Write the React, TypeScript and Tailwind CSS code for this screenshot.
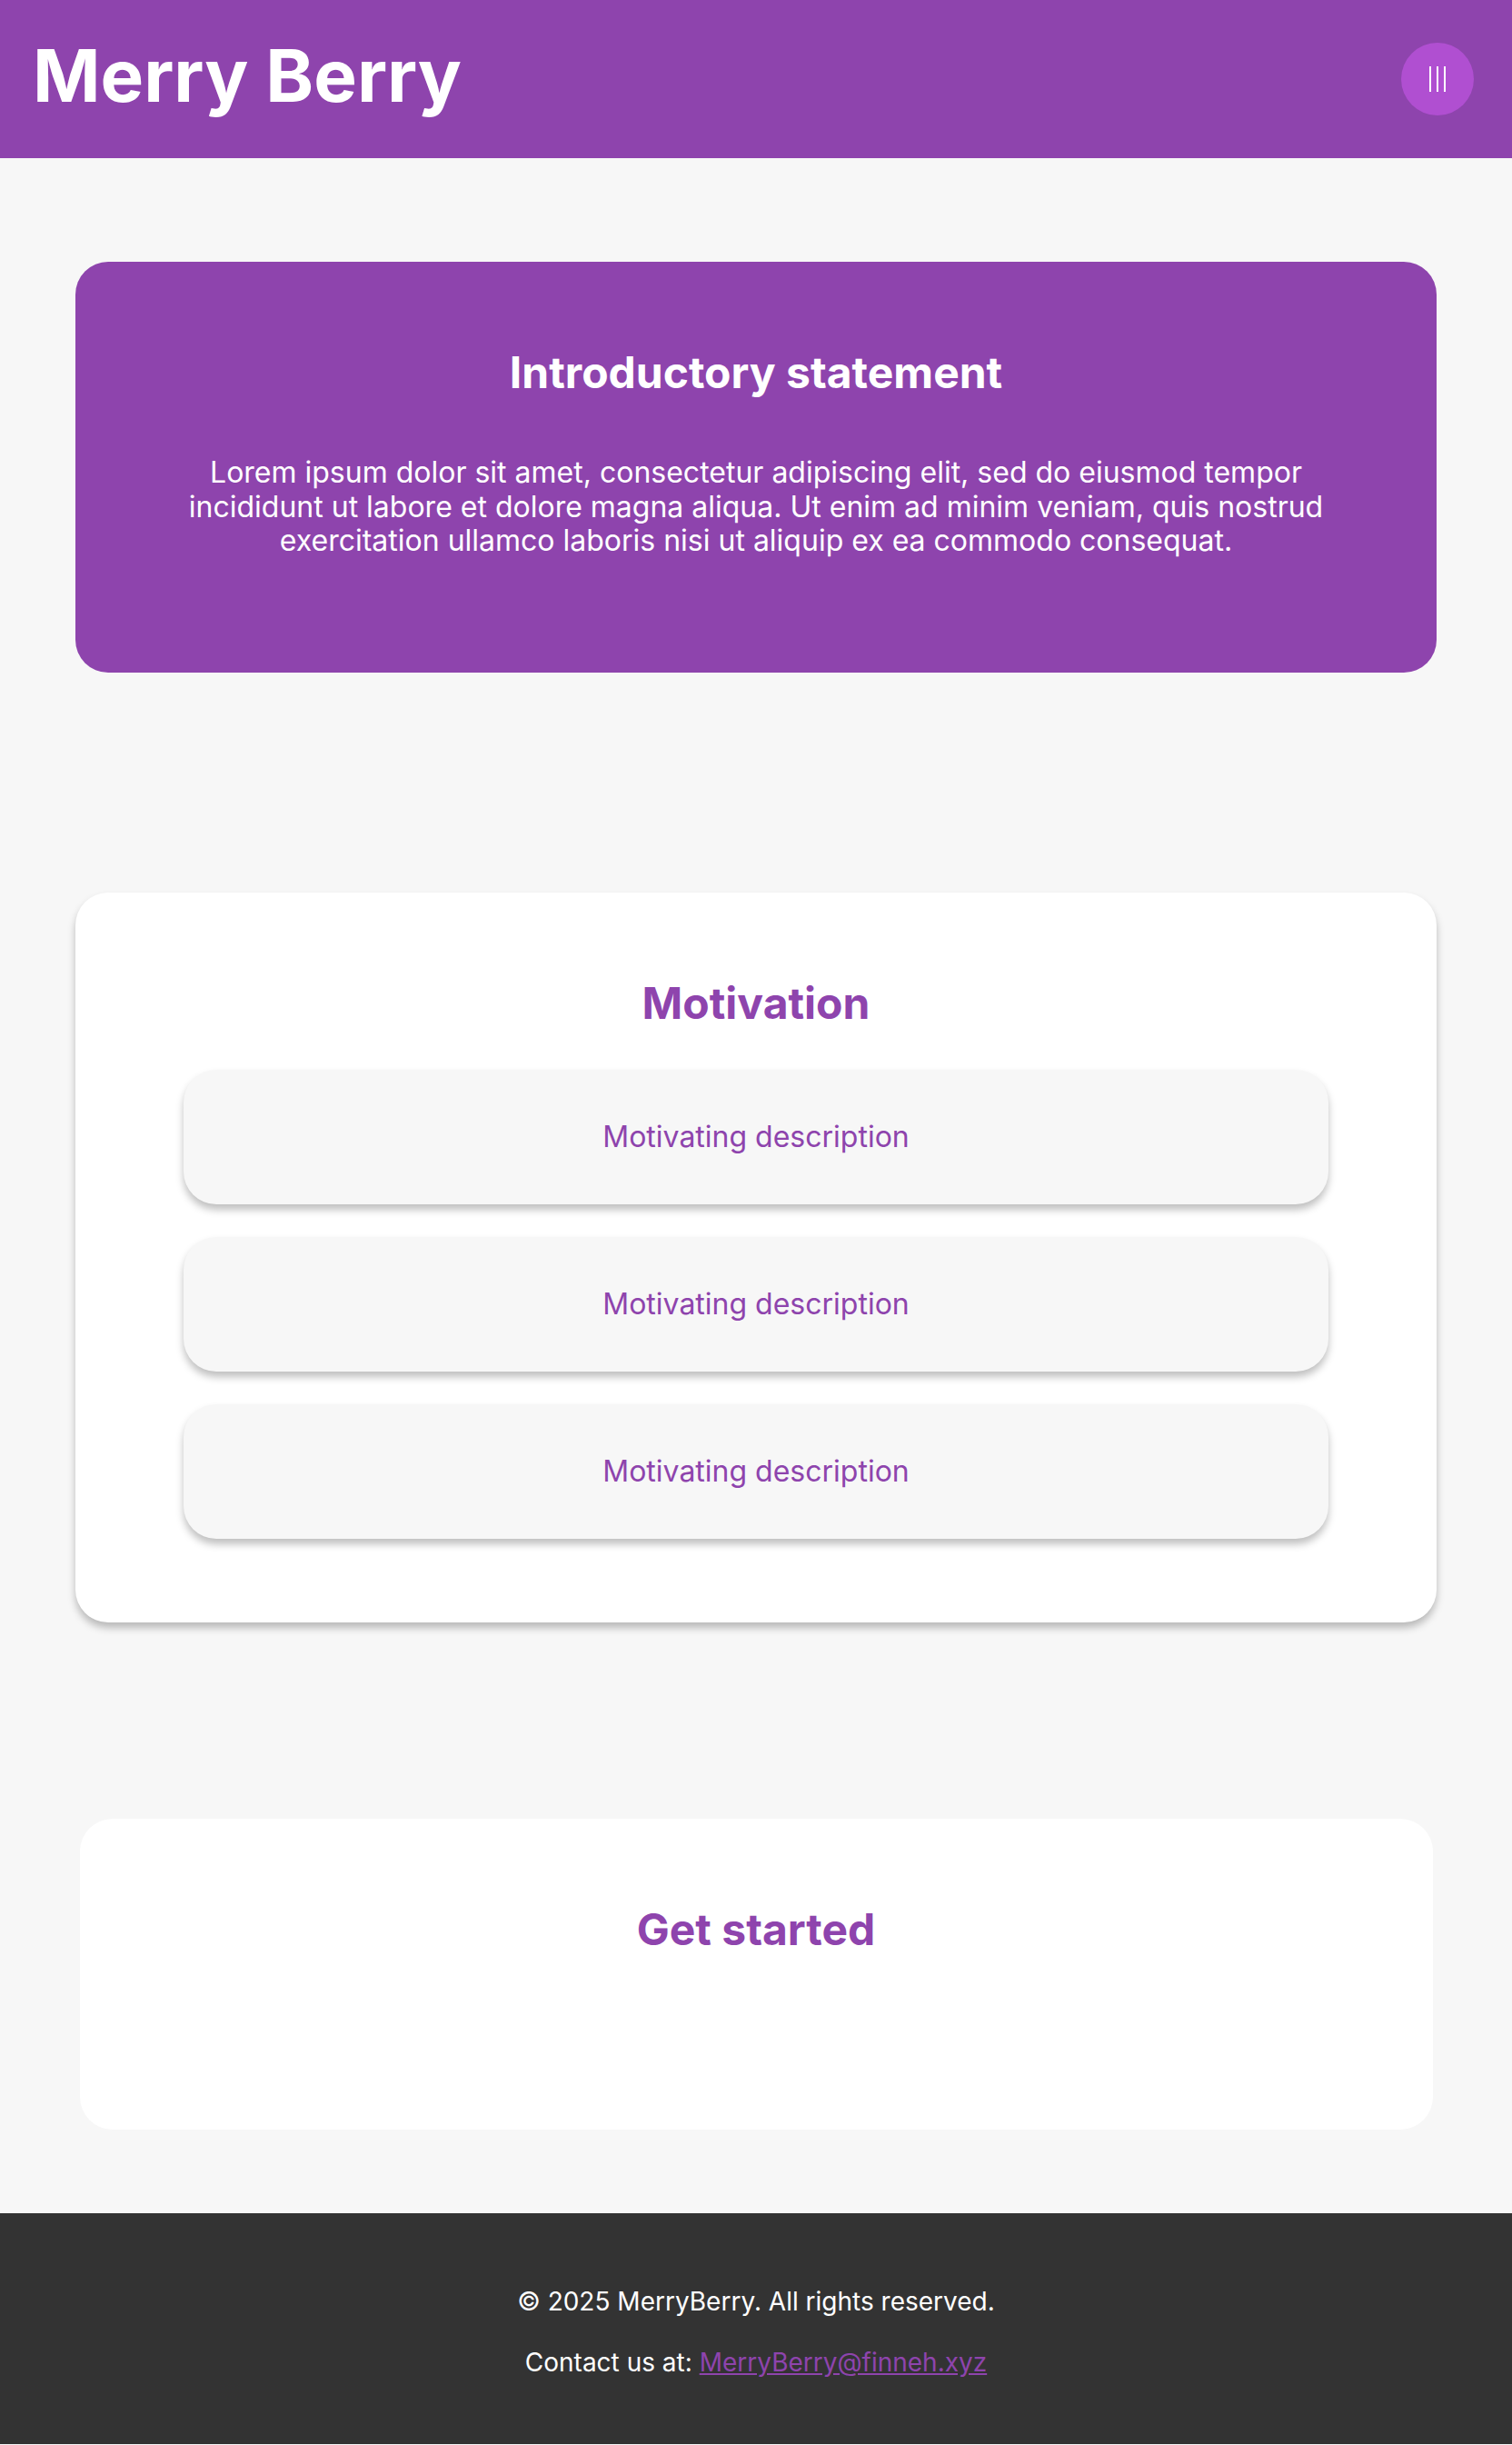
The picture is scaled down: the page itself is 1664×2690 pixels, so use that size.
import React from 'react'

const PURPLE = '#8e44ad'

const MOTIVATIONS = ['Motivating description', 'Motivating description', 'Motivating description']

function MenuButton() {
  return (
    <button className="w-[80px] h-[80px] rounded-full bg-[#b04fd1] flex items-center justify-center gap-[6px] cursor-pointer">
      <span className="block w-[2px] h-[28px] bg-white" />
      <span className="block w-[2px] h-[28px] bg-white" />
      <span className="block w-[2px] h-[28px] bg-white" />
    </button>
  )
}

export default function App() {
  return (
    <div className="min-h-screen bg-[#f7f7f7] font-['Inter','Noto_Sans',sans-serif]">
      {/* HEADER */}
      <header className="h-[174px] bg-[#8e44ad] flex items-center justify-between pl-[36px] pr-[42px]">
        <h1 className="-mt-2 text-[80px] leading-[80px] font-bold text-white">Merry Berry</h1>
        <MenuButton />
      </header>

      <main className="pt-[114px] pb-[92px] flex flex-col items-center">
        {/* INTRO */}
        <section className="w-[90%] h-[452px] bg-[#8e44ad] rounded-[36px] pt-[93px] text-center text-white">
          <h2 className="text-[48px] leading-[58px] font-bold">Introductory statement</h2>
          <p className="mt-[62px] max-w-[1300px] mx-auto text-[32px] leading-[37.5px]">
            Lorem ipsum dolor sit amet, consectetur adipiscing elit, sed do eiusmod tempor incididunt ut labore et dolore magna aliqua. Ut enim ad minim veniam, quis nostrud exercitation ullamco laboris nisi ut aliquip ex ea commodo consequat.
          </p>
        </section>

        {/* MOTIVATION */}
        <section className="mt-[242px] w-[90%] bg-white rounded-[36px] pt-[93px] pb-[92px] text-center shadow-[0_6px_8px_rgba(0,0,0,0.25)]">
          <h2 className="text-[48px] leading-[58px] font-bold text-[#8e44ad]">Motivation</h2>
          <div className="mt-[44px] flex flex-col items-center gap-[36px]">
            {MOTIVATIONS.map((m, i) => (
              <div
                key={i}
                className="w-[1260px] h-[148px] rounded-[36px] bg-[#f7f7f7] flex items-center justify-center text-[32px] text-[#8e44ad] shadow-[0_6px_8px_rgba(0,0,0,0.25)]"
              >
                {m}
              </div>
            ))}
          </div>
        </section>

        {/* GET STARTED */}
        <section className="mt-[216px] w-[1489px] h-[342px] bg-white rounded-[36px] pt-[93px] text-center">
          <h2 className="text-[48px] leading-[58px] font-bold" style={{ color: PURPLE }}>Get started</h2>
        </section>
      </main>

      {/* FOOTER */}
      <footer className="h-[254px] bg-[#333333] text-white text-center pt-[80px] text-[28px] leading-[34px]">
        <p>© 2025 MerryBerry. All rights reserved.</p>
        <p className="mt-[33px]">
          Contact us at: <a href="#" className="text-[#8e44ad] underline">MerryBerry@finneh.xyz</a>
        </p>
      </footer>
    </div>
  )
}
